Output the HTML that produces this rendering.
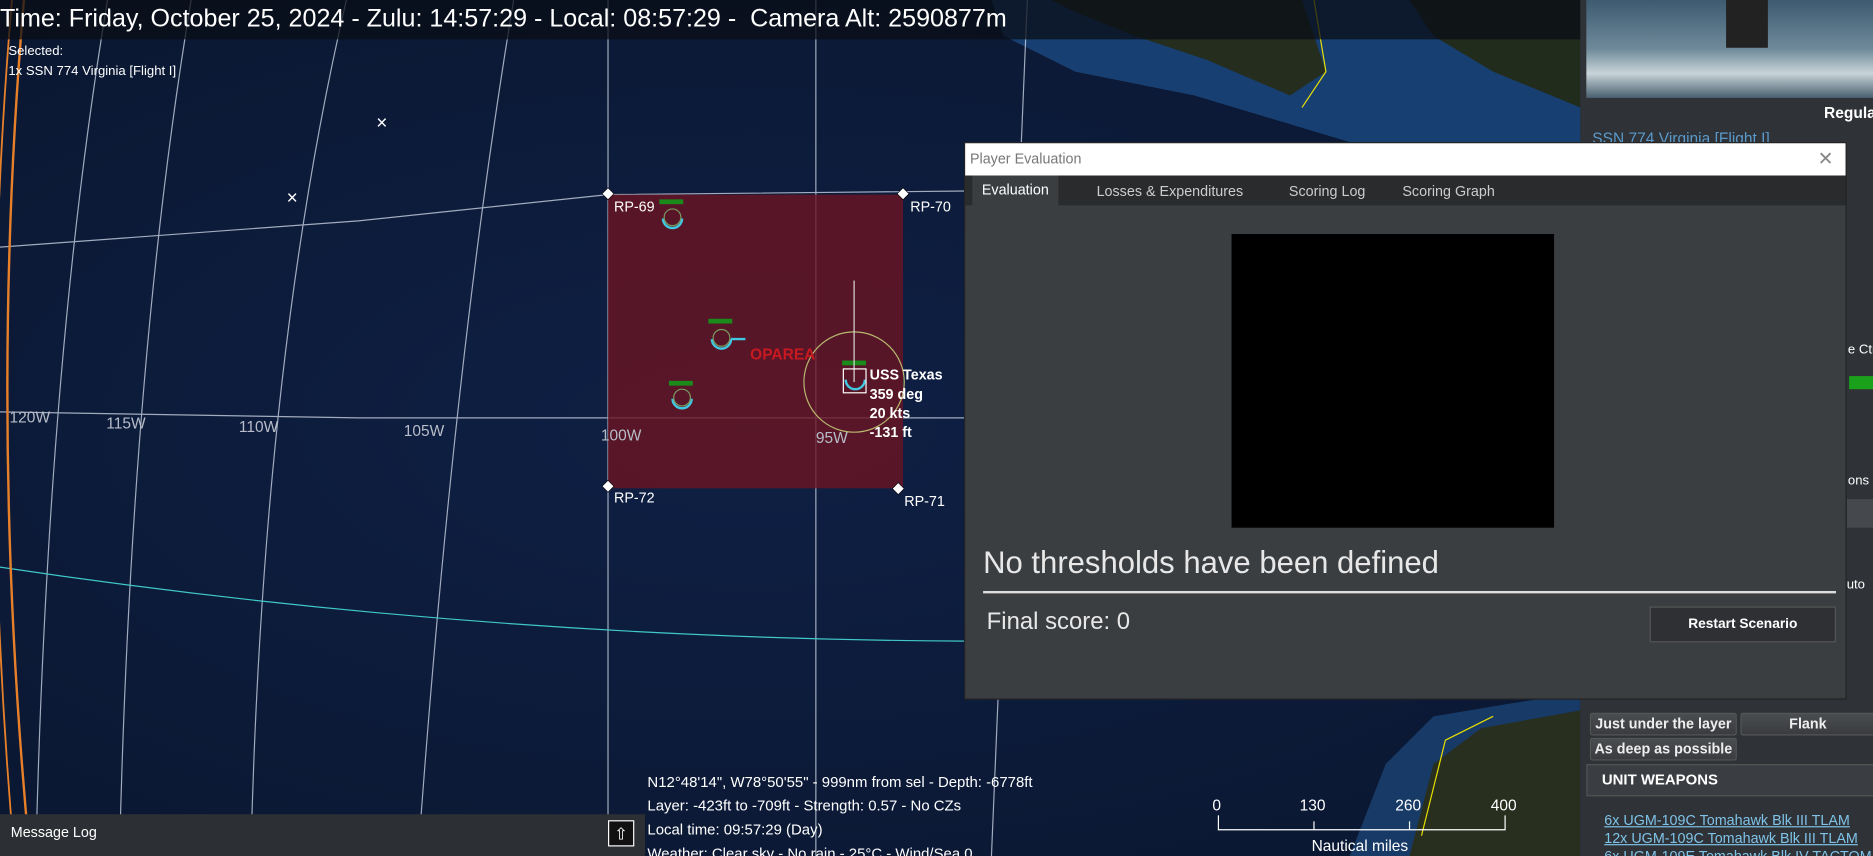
<!DOCTYPE html>
<html><head><meta charset="utf-8"><style>
html,body{margin:0;padding:0;width:1873px;height:856px;overflow:hidden;background:#0c1a33;}
#s{position:absolute;left:0;top:0;width:1568px;height:717px;transform:scale(1.19452,1.1939);transform-origin:0 0;overflow:hidden;font-family:"Liberation Sans",sans-serif;}
.a{position:absolute;white-space:nowrap;}
.btn{position:absolute;background:linear-gradient(#4a4d50,#3a3c3f);border:1px solid #555;color:#eee;font:bold 12px "Liberation Sans",sans-serif;text-align:center;line-height:17px;border-radius:2px;white-space:nowrap;}
.lnk{color:#7fc3e8;text-decoration:underline;font-size:12px;position:absolute;left:1343px;white-space:nowrap;}
</style></head><body><div id="s">
<svg class="a" style="left:0;top:0" width="1568" height="717">
<defs><radialGradient id="o" cx="0.4" cy="0.5" r="0.8"><stop offset="0" stop-color="#0f2045"/><stop offset="1" stop-color="#09152c"/></radialGradient></defs>
<rect width="1568" height="717" fill="url(#o)"/>
<path d="M830,0 L1323,0 L1323,130 L1200,140 L1100,110 L1000,80 L900,60 L840,30Z" fill="#183f72"/>
<path d="M880,0 L1090,0 L1110,60 L1080,80 L1010,50 L950,30 L900,10Z" fill="#252d1e"/>
<path d="M1180,0 L1323,0 L1323,90 L1250,60 L1200,30Z" fill="#212c1c"/>
<path d="M1100,0 L1110,60 L1090,90" stroke="#e8e000" fill="none"/>
<path d="M1130,717 L1160,640 L1200,600 L1260,590 L1323,580 L1323,717Z" fill="#183a66"/>
<path d="M1180,717 L1200,640 L1240,610 L1323,595 L1323,717Z" fill="#282f1e"/>
<path d="M1190,700 L1210,620 L1250,600" stroke="#e8e000" fill="none"/>
<g stroke="#c8d0e0" stroke-width="1" fill="none" opacity="0.8">
<path d="M509,0 L509,717"/><path d="M683,0 L683,717"/>
<path d="M430,0 Q380,300 350,717"/><path d="M290,0 Q220,300 210,717"/><path d="M160,0 Q110,300 100,717"/><path d="M90,0 Q40,300 30,717"/>
<path d="M0,207 L300,185 L509,163 L808,160"/>
<path d="M0,345 L300,350 L509,350 L808,350"/>
<path d="M860,0 L830,717"/>
</g>
<path d="M0,475 Q400,535 808,537" stroke="#40c8c8" fill="none"/>
<path d="M20,0 Q-10,350 25,717" stroke="#e8802a" stroke-width="2" fill="none"/>
<path d="M10,0 Q-20,350 12,717" stroke="#e8802a" stroke-width="1.5" fill="none"/>
<rect x="509" y="163" width="247" height="246" fill="#6a1422" opacity="0.8"/>
<g fill="#fff" stroke="#000" stroke-width="0.5"><rect x="505" y="159" width="7" height="7" transform="rotate(45 509 163)"/><rect x="752" y="159" width="7" height="7" transform="rotate(45 756 163)"/><rect x="505" y="404" width="7" height="7" transform="rotate(45 509 408)"/><rect x="748" y="406" width="7" height="7" transform="rotate(45 752 410)"/></g>
<g fill="#1a8a1a"><rect x="552" y="167" width="20" height="4"/><rect x="593" y="267" width="20" height="4"/><rect x="560" y="319" width="20" height="4"/><rect x="705" y="302" width="20" height="4"/></g>
<g stroke="#40c8e0" stroke-width="2" fill="none"><path d="M555,183 a8,8 0 0 0 16,0"/><path d="M596,284 a8,8 0 0 0 16,0"/><path d="M563,334 a8,8 0 0 0 16,0"/><path d="M708,318 a8,8 0 0 0 16,0"/><path d="M612,284 L624,284"/></g>
<g stroke="#7a9a60" fill="none"><circle cx="563" cy="182" r="7"/><circle cx="604" cy="283" r="7"/><circle cx="571" cy="333" r="7"/></g>
<circle cx="715" cy="320" r="42" stroke="#b8b870" fill="none"/>
<path d="M715,235 L715,320" stroke="#ddd"/>
<rect x="706" y="309" width="19" height="20" stroke="#fff" fill="none"/>
<text x="240" y="171" fill="#fff" font-size="16">×</text><text x="315" y="108" fill="#fff" font-size="16">×</text>
<text x="628" y="301" fill="#c81820" font-size="13" font-weight="bold">OPAREA</text>
<g fill="#fff" font-size="12"><text x="514" y="177">RP-69</text><text x="762" y="177">RP-70</text><text x="514" y="421">RP-72</text><text x="757" y="424">RP-71</text></g>
<g fill="#fff" font-size="12" font-weight="bold"><text x="728" y="318">USS Texas</text><text x="728" y="334">359 deg</text><text x="728" y="350">20 kts</text><text x="728" y="366">-131 ft</text></g>
<g fill="#b8bcc8" font-size="13"><text x="8" y="354">120W</text><text x="89" y="359">115W</text><text x="200" y="362">110W</text><text x="338" y="365">105W</text><text x="503" y="369">100W</text><text x="683" y="371">95W</text></g>
<g stroke="#fff" fill="none"><path d="M1020,683 L1020,695 L1260,695 L1260,683"/><path d="M1100,688 L1100,695 M1180,688 L1180,695"/></g>
<g fill="#fff" font-size="13"><text x="1015" y="679">0</text><text x="1088" y="679">130</text><text x="1168" y="679">260</text><text x="1248" y="679">400</text><text x="1098" y="713">Nautical miles</text></g>
</svg>
<div class="a" style="left:0;top:0;width:1323px;height:33px;background:rgba(10,14,22,0.75)"></div>
<div class="a" style="left:0;top:4px;color:#fff;font-size:21px;white-space:pre">Time: Friday, October 25, 2024 - Zulu: 14:57:29 - Local: 08:57:29 -  Camera Alt: 2590877m</div>
<div class="a" style="left:7px;top:35px;color:#fff;font-size:11px;line-height:17px">Selected:<br>1x SSN 774 Virginia [Flight I]</div>
<div class="a" style="left:542px;top:645px;color:#fff;font-size:12.5px;line-height:20px;white-space:pre">N12°48'14", W78°50'55" - 999nm from sel - Depth: -6778ft
Layer: -423ft to -709ft - Strength: 0.57 - No CZs
Local time: 09:57:29 (Day)
Weather: Clear sky - No rain - 25°C - Wind/Sea 0</div>
<div class="a" style="left:0;top:682px;width:540px;height:35px;background:#2c2f33"></div>
<div class="a" style="left:9px;top:690px;color:#fff;font-size:12px">Message Log</div>
<div class="a" style="left:509px;top:687px;width:20px;height:20px;border:1px solid #fff;background:#111;color:#fff;text-align:center;font-size:14px;line-height:20px">⇧</div>
<!-- right panel -->
<div class="a" style="left:1323px;top:0;width:245px;height:717px;background:#2f3236"></div>
<div class="a" style="left:1328px;top:0;width:240px;height:82px;background:linear-gradient(#3d5a70,#6e8a9a 50%,#c8d4d8 75%,#4a6070)"></div>
<div class="a" style="left:1445px;top:0;width:35px;height:40px;background:#222"></div>
<div class="a" style="left:1527px;top:87px;color:#fff;font:bold 13px 'Liberation Sans',sans-serif">Regula</div>
<div class="a" style="left:1333px;top:108px;color:#5a9acb;font-size:13px">SSN 774 Virginia [Flight I]</div>
<div class="a" style="left:1547px;top:287px;color:#fff;font-size:11px">e Ctr</div>
<div class="a" style="left:1548px;top:315px;width:20px;height:11px;background:#1aa01a"></div>
<div class="a" style="left:1547px;top:397px;color:#fff;font-size:11px">ons</div>
<div class="a" style="left:1546px;top:418px;width:22px;height:24px;background:#45484c"></div>
<div class="a" style="left:1546px;top:484px;color:#fff;font-size:11px">uto</div>
<div class="btn" style="left:1331px;top:597px;width:121px;">Just under the layer</div>
<div class="btn" style="left:1457px;top:597px;width:111px;">Flank</div>
<div class="btn" style="left:1331px;top:618px;width:121px;">As deep as possible</div>
<div class="a" style="left:1328px;top:640px;width:240px;height:25px;background:#3a3d41;border:1px solid #555;color:#fff;font:bold 12.5px 'Liberation Sans',sans-serif;line-height:25px;text-indent:12px">UNIT WEAPONS</div>
<div class="lnk" style="top:680px">6x UGM-109C Tomahawk Blk III TLAM</div>
<div class="lnk" style="top:695px">12x UGM-109C Tomahawk Blk III TLAM</div>
<div class="lnk" style="top:710px">6x UGM-109E Tomahawk Blk IV TACTOM</div>
<!-- dialog -->
<div class="a" style="left:807px;top:119px;width:739px;height:467px;background:#3b3e41;border:1px solid #222;box-sizing:border-box">
 <div style="height:27px;background:#fff;position:relative"><span style="position:absolute;left:4px;top:6px;color:#777;font-size:12px">Player Evaluation</span><span style="position:absolute;right:10px;top:3px;color:#888;font-size:16px">✕</span></div>
 <div style="height:25px;background:#2a2b2d;position:relative;font-size:12px;color:#ccc">
  <span style="position:absolute;left:6px;top:0;width:72px;height:25px;background:#3b3e41;color:#fff;line-height:25px;text-align:center">Evaluation</span>
  <span style="position:absolute;left:110px;top:6px">Losses &amp; Expenditures</span>
  <span style="position:absolute;left:271px;top:6px">Scoring Log</span>
  <span style="position:absolute;left:366px;top:6px">Scoring Graph</span>
 </div>
 <div class="a" style="left:223px;top:76px;width:270px;height:246px;background:#000"></div>
 <div class="a" style="left:15px;top:336px;color:#e8e8e8;font-size:26px">No thresholds have been defined</div>
 <div class="a" style="left:15px;top:375px;width:714px;height:2px;background:#ddd"></div>
 <div class="a" style="left:18px;top:390px;color:#e8e8e8;font-size:20px">Final score: 0</div>
 <div class="a" style="left:573px;top:388px;width:154px;height:28px;background:#2e3033;border:1px solid #555;color:#fff;font:bold 11.5px 'Liberation Sans',sans-serif;line-height:28px;text-align:center">Restart Scenario</div>
</div>
</div></body></html>
